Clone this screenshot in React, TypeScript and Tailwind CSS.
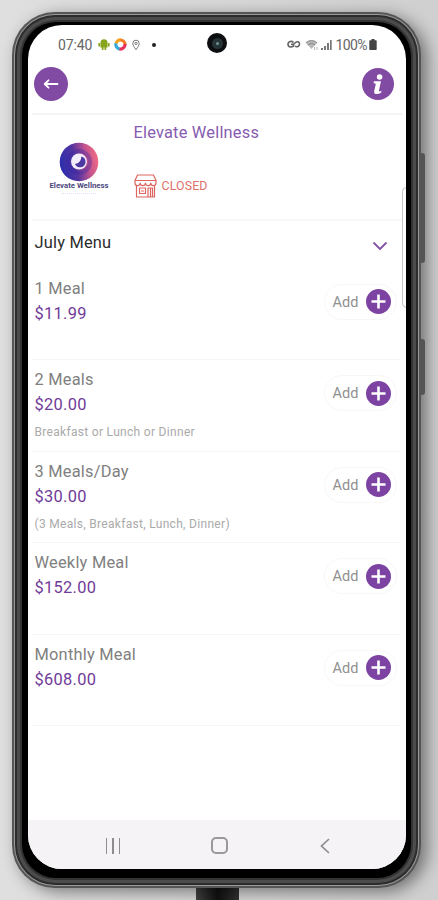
import type { ReactNode } from 'react'

type MenuItem = {
  name: string
  price: string
  description?: string
}

const menu: MenuItem[] = [
  { name: '1 Meal', price: '$11.99' },
  { name: '2 Meals', price: '$20.00', description: 'Breakfast or Lunch or Dinner' },
  { name: '3 Meals/Day', price: '$30.00', description: '(3 Meals, Breakfast, Lunch, Dinner)' },
  { name: 'Weekly Meal', price: '$152.00' },
  { name: 'Monthly Meal', price: '$608.00' },
]

const StatusBar = () => (
  <div className="relative flex h-[39px] shrink-0 items-center pr-[29px] pl-[30px] text-[#666]">
    <span className="w-[35px] text-[14px] leading-none tracking-[-0.1px]">07:40</span>
    {/* android */}
    <svg className="ml-[5px]" width="12" height="13" viewBox="0 0 12 13" fill="#86a51d">
      <path d="M2.5 4.7a3.5 3.5 0 0 1 7 0zM2.5 4.6h7v5h-7zM.4 5h1.7v3.5H.4zM9.9 5h1.7v3.5H9.9zM3.8 9h1.7v3H3.8zM6.5 9h1.7v3H6.5z" />
    </svg>
    <svg className="ml-[4px]" width="13" height="13" viewBox="0 0 13 13" fill="none" strokeWidth="3.2">
      <path d="M2 5.7A4.6 4.6 0 0 1 7 2" stroke="#f5a21d" />
      <path d="M6.5 2a4.6 4.6 0 0 1 4.5 4.5" stroke="#f47b25" />
      <path d="M11 6a4.6 4.6 0 0 1-6 4.8" stroke="#e5325c" />
      <path d="M5.5 11A4.6 4.6 0 0 1 2 5.3" stroke="#36a9dc" />
    </svg>
    <svg className="ml-[4px]" width="10" height="12" viewBox="0 0 10 12" fill="none" stroke="#777">
      <path d="M5 10.6C3.2 8 1.8 6.5 1.8 4.4a3.2 3.2 0 0 1 6.4 0C8.2 6.5 6.8 8 5 10.6z" />
      <circle cx="5" cy="4.5" r="1.1" />
    </svg>
    <span className="ml-[11px] size-[4px] rounded-full bg-[#222]" />
    {/* front camera */}
    <div className="absolute top-[8px] left-[179px] flex size-[20px] items-center justify-center rounded-full bg-[#0c0e0f]">
      <div className="flex size-[11px] items-center justify-center rounded-full bg-[#263438]">
        <div className="size-[3px] rounded-full bg-[#71908f]" />
      </div>
    </div>
    <div className="ml-auto flex items-center">
      <svg className="mr-[2px]" width="14" height="9" viewBox="0 0 14 9" fill="none" stroke="#666" strokeWidth="1.6">
        <path d="M6.5 2.500C5 .8 1 1 1 4.200s3.500 3.300 5.500 1.800V4.300H4M6.500 4.300L8.500 2.500c1.500-1.500 4-.8 4 1.500s-2.500 3.500-4.500 2.200" />
      </svg>
      <svg className="ml-[2px]" width="14" height="12" viewBox="0 0 14 12" fill="none">
        <path d="M.8 3.8a8.3 8.3 0 0 1 11.4 0L6.5 10z" fill="#b8b8b8" />
        <path d="M.8 3.8a8.3 8.3 0 0 1 11.4 0M2.8 6a5.4 5.4 0 0 1 7.4 0" stroke="#888" />
        <path d="M9.5 8v3M12 8v3" stroke="#bbb" />
      </svg>
      <svg className="ml-[2px]" width="11" height="11" viewBox="0 0 11 11" fill="#777">
        <path d="M0 9h2v2H0zM3 7h2v4H3zM6 4h2v7H6zM9 1h1.7v10H9z" />
      </svg>
      <span className="ml-[4px] text-[14px] leading-none tracking-[-0.6px]">100%</span>
      <svg className="ml-[2px]" width="8" height="11" viewBox="0 0 8 11" fill="#444">
        <path d="M2.5 0h3v1.2H7q.7 0 .7.7v8.4q0 .7-.7.7H1q-.7 0-.7-.7V1.9q0-.7.7-.7h1.5z" />
      </svg>
    </div>
  </div>
)

const Header = () => (
  <div className="mr-[3px] ml-[4px] flex h-[51px] shrink-0 items-start justify-between border-b-2 border-[#f5f5f5] pr-[9px] pl-[2px]">
    <button className="mt-[3px] flex size-[34px] items-center justify-center rounded-full bg-[#814aa3]">
      <svg width="16" height="12" viewBox="0 0 16 12" fill="none" stroke="white" strokeWidth="1.8" strokeLinecap="round" strokeLinejoin="round">
        <path d="M14.5 6H2M5.5 2.3L1.7 6l3.8 3.7" />
      </svg>
    </button>
    <button className="mt-[4px]">
      <svg width="32" height="32" viewBox="0 0 32 32">
        <circle cx="16" cy="16" r="16" fill="#814aa3" />
        <circle cx="17.6" cy="9" r="2.8" fill="white" />
        <path d="M12 13.3h7l-2 9q-.3 1.3.7 1.1l1.800-.6-.3 1.800q-2 1.500-4.500 1.500-3.200-.2-2.500-3.200l1.500-6.500q0-1.100-1.200-1.100h-1z" fill="white" />
      </svg>
    </button>
  </div>
)

const StoreLogo = () => (
  <div className="mt-[27px] ml-[14px] flex w-[74px] flex-col items-center">
    <svg width="40" height="40" viewBox="0 0 40 40">
      <defs>
        <linearGradient id="ring" x1="0" y1="0.6" x2="1" y2="0.4">
          <stop offset="0" stopColor="#2a2dad" />
          <stop offset="0.4" stopColor="#5534a0" />
          <stop offset="0.72" stopColor="#c3538f" />
          <stop offset="1" stopColor="#f26c83" />
        </linearGradient>
      </defs>
      <circle cx="20" cy="20" r="19.3" fill="url(#ring)" />
      <circle cx="20" cy="20" r="11" fill="none" stroke="#3425a3" strokeWidth="4" opacity="0.35" />
      <circle cx="20" cy="19.5" r="8" fill="#f3ecfb" />
      <path d="M22.500 14.500a5.500 5.500 0 1 1-6.500 7.500q5.500-.5 6.500-7.500z" fill="#4b38a2" />
    </svg>
    <span className="-mt-px text-[7.8px] leading-[10px] font-bold whitespace-nowrap text-[#4d4a80]">Elevate Wellness</span>
    <div className="mt-[2px] w-[34px] border-t border-dotted border-[#e6deef]" />
  </div>
)

const StoreInfo = () => (
  <div className="mr-[3px] ml-[4px] flex h-[106px] shrink-0 border-b-2 border-[#f8f8f8]">
    <div className="-ml-[4px] flex">
      <StoreLogo />
    </div>
    <div className="ml-[17.5px] flex flex-col">
      <h1 className="mt-[8px] text-[16.4px] leading-[20px] tracking-[0.2px] text-[#875bb0]">Elevate Wellness</h1>
      <div className="mt-[31px] flex items-center gap-[5px]">
        <svg width="23" height="24" viewBox="0 0 23 24" fill="none" stroke="#db665f" strokeWidth="1.2" strokeLinejoin="round">
          <path d="M3.5 1h16L22 6.500H1zM1 6.500V9a2.600 2.600 0 0 0 5.200 0 2.600 2.600 0 0 0 5.300 0 2.600 2.600 0 0 0 5.300 0A2.600 2.600 0 0 0 22 9V6.500M2.500 11.500V23h18V11.500M5.500 14h6v5.500h-6zM14 23v-9h4.500v9M7 17h3M16.500 14v9" />
        </svg>
        <span className="text-[12.4px] leading-none tracking-[0.1px] text-[#e0716b]">CLOSED</span>
      </div>
    </div>
  </div>
)

const MenuHeading = ({ children }: { children: ReactNode }) => (
  <div className="flex h-[47.5px] shrink-0 items-center justify-between pr-[18px] pl-[6.5px]">
    <h2 className="-mt-[2px] text-[16.4px] tracking-[0.2px] text-[#2c2c2c]">{children}</h2>
    <svg className="mt-[3px]" width="16" height="10" viewBox="0 0 16 10" fill="none" stroke="#8254a4" strokeWidth="1.8" strokeLinecap="round" strokeLinejoin="round">
      <path d="M2 2l6 6 6-6" />
    </svg>
  </div>
)

const MenuRow = ({ name, price, description }: MenuItem) => (
  <li className="mr-[6px] ml-[4px] flex h-[91.5px] justify-between border-b-[1.5px] border-[#f6f6f6] pl-[2.5px]">
    <div className="pt-[9px] whitespace-nowrap">
      <h3 className="text-[16.4px] leading-[22px] tracking-[0.23px] text-[#808080]">{name}</h3>
      <p className="mt-[3px] text-[16.4px] leading-[22px] tracking-[0.3px] text-[#713b98]">{price}</p>
      {description && <p className="mt-[7px] text-[12px] leading-[18px] tracking-[0.31px] text-[#aaa]">{description}</p>}
    </div>
    <button className="mt-[15px] mr-[3px] flex h-[36px] w-[73px] items-center justify-between rounded-full border border-[#f7f7f7] pr-[5px] pl-[7.5px] text-[14.5px] text-[#909090]">
      <span className="pt-[2px]">Add</span>
      <svg width="25" height="25" viewBox="0 0 25 25">
        <circle cx="12.5" cy="12.5" r="12.5" fill="#7d43a2" />
        <path d="M12.5 5.5v14M5.5 12.5h14" stroke="white" strokeWidth="2.6" />
      </svg>
    </button>
  </li>
)

const NavBar = () => (
  <div className="mt-auto flex h-[49px] shrink-0 items-center bg-[#f5f3f6] pt-[2px] pr-[28px] pl-[32px]">
    <div className="flex flex-1 justify-center gap-[5px]">
      <i className="h-[16px] w-[1.5px] bg-[#8d8d8d]" />
      <i className="h-[16px] w-[1.5px] bg-[#8d8d8d]" />
      <i className="h-[16px] w-[1.5px] bg-[#8d8d8d]" />
    </div>
    <div className="flex flex-1 justify-center">
      <div className="size-[17px] rounded-[5px] border-2 border-[#999]" />
    </div>
    <div className="flex flex-1 justify-center">
      <svg width="10" height="16" viewBox="0 0 10 16" fill="none" stroke="#8d8d8d" strokeWidth="1.7">
        <path d="M9 1L1.5 8 9 15" />
      </svg>
    </div>
  </div>
)

export default function App() {
  return (
    <div className="relative h-[900px] w-[438px] overflow-hidden bg-linear-to-r from-[#dfdfdf] via-[#d8d8d8] to-[#cfcfcf] pt-[12px] pl-[12px] font-[Roboto,sans-serif]">
      {/* side buttons and cable */}
      <div className="absolute top-[153px] left-[420px] z-10 h-[110px] w-[5px] rounded-r-[3px] bg-[#555]" />
      <div className="absolute top-[339px] left-[420px] z-10 h-[56px] w-[5px] rounded-r-[3px] bg-[#555]" />
      <div className="absolute top-[886px] left-[196px] h-[14px] w-[43px] bg-linear-to-r from-[#444] via-[#111] to-[#333]" />

      <div className="relative h-[876px] w-[409px] rounded-[43px] bg-[#555] p-[2px] shadow-[6px_4px_16px_rgba(0,0,0,0.45)]">
        <div className="h-full rounded-[41px] bg-[#999] p-px">
          <div className="h-full rounded-[40px] bg-[#2c2c2c] p-[2px]">
            <div className="h-full rounded-[38px] bg-[#4c4c4c] p-[3px]">
              <div className="h-full rounded-[36px] bg-[#333] p-[2px]">
                <div className="h-full rounded-[34px] bg-black pt-[3px] pr-[5px] pb-[9px] pl-[6px]">
                  <main className="relative flex h-full flex-col overflow-hidden rounded-[34px] bg-white">
                    <StatusBar />
                    <Header />
                    <StoreInfo />
                    <MenuHeading>July Menu</MenuHeading>
                    <ul>
                      {menu.map((item) => (
                        <MenuRow key={item.name} {...item} />
                      ))}
                    </ul>
                    <NavBar />
                    {/* edge panel handle */}
                    <div className="absolute top-[162px] -right-[5px] h-[121px] w-[9px] rounded-[5px] border border-[#c4c4c4] bg-white" />
                  </main>
                </div>
              </div>
            </div>
          </div>
        </div>
      </div>
    </div>
  )
}
